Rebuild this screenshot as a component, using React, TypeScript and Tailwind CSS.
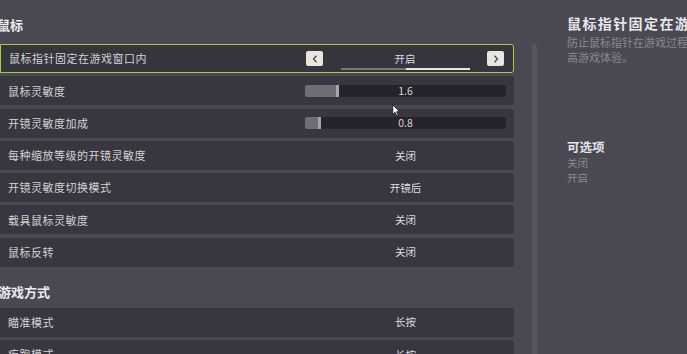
import React from 'react';

type Row = {
  label: string;
  value: string;
  kind?: 'toggle' | 'slider';
  fill?: number;
  active?: boolean;
};

const mouseRows: Row[] = [
  { label: '鼠标指针固定在游戏窗口内', value: '开启', kind: 'toggle', active: true },
  { label: '鼠标灵敏度', value: '1.6', kind: 'slider', fill: 31 },
  { label: '开镜灵敏度加成', value: '0.8', kind: 'slider', fill: 13 },
  { label: '每种缩放等级的开镜灵敏度', value: '关闭' },
  { label: '开镜灵敏度切换模式', value: '开镜后' },
  { label: '载具鼠标灵敏度', value: '关闭' },
  { label: '鼠标反转', value: '关闭' },
];

const playRows: Row[] = [
  { label: '瞄准模式', value: '长按' },
  { label: '疾跑模式', value: '长按' },
];

const Chevron: React.FC<{ dir: 'left' | 'right' }> = ({ dir }) => (
  <svg width="6" height="8" viewBox="0 0 6 8" fill="none">
    <path
      d={dir === 'left' ? 'M4.5 0.8 L1.5 4 L4.5 7.2' : 'M1.5 0.8 L4.5 4 L1.5 7.2'}
      stroke="#4a4850"
      strokeWidth="1.3"
    />
  </svg>
);

const SettingRow: React.FC<{ row: Row }> = ({ row }) => {
  return (
    <div
      className={`flex items-center h-[29px] shrink-0 rounded-r-[3px] ${
        row.active ? 'bg-[#36343c] border-[1.5px] border-[#a3cf45]' : 'bg-[#38363e]'
      }`}
    >
      <div className="flex-1 pl-[8px] text-[11px] tracking-[0.5px] text-[#d3d2d6]">{row.label}</div>
      <div className="w-[201px] mr-[8px] h-full flex items-center justify-center">
        {row.kind === 'toggle' && (
          <div className="w-full h-full flex items-center justify-between pl-[2px] pr-[1px]">
            <div className="w-[17px] h-[15px] rounded-[2px] bg-[#e8e6df] flex items-center justify-center">
              <Chevron dir="left" />
            </div>
            <div className="relative h-full flex-1 flex items-center justify-center">
              <span className="text-[10.5px] text-[#dcdbe0]">{row.value}</span>
              <div className="absolute bottom-[2.5px] left-[18px] flex">
                <div className="w-[65px] h-[2px] bg-[#77757d]" />
                <div className="w-[64px] h-[2px] bg-[#e6e5e8]" />
              </div>
            </div>
            <div className="w-[17px] h-[15px] rounded-[2px] bg-[#e8e6df] flex items-center justify-center">
              <Chevron dir="right" />
            </div>
          </div>
        )}
        {row.kind === 'slider' && (
          <div className="relative w-full h-[12px] rounded-[2px] bg-[#26242a] flex items-center">
            <div className="h-full flex rounded-l-[2px] overflow-hidden">
              <div className="h-full bg-[#6f6d75]" style={{ width: row.fill }} />
              <div className="h-full w-[3px] bg-[#a8a6ad]" />
            </div>
            <span className="absolute inset-0 flex items-center justify-center text-[10.5px] text-[#d7d6da]">
              {row.value}
            </span>
          </div>
        )}
        {!row.kind && <span className="text-[10.5px] text-[#dcdbe0]">{row.value}</span>}
      </div>
    </div>
  );
};

const App: React.FC = () => {
  return (
    <div className="relative w-[687px] h-[354px] overflow-hidden bg-[#4a4853] flex font-['Noto_Sans_CJK_SC',sans-serif]">
      {/* 설정 목록 */}
      <div className="w-[514px] shrink-0 flex flex-col">
        <div className="shrink-0 pt-[16px] h-[44px] -ml-[3px] text-[13px] leading-[18px] font-bold text-[#ececef]">鼠标</div>
        <div className="shrink-0 flex flex-col gap-[3.3px]">
          {mouseRows.map((row) => (
            <SettingRow key={row.label} row={row} />
          ))}
        </div>
        <div className="shrink-0 mt-[16px] mb-[7px] -ml-[2px] text-[13px] leading-[18px] font-bold text-[#ececef]">游戏方式</div>
        <div className="shrink-0 flex flex-col gap-[3.3px]">
          {playRows.map((row) => (
            <SettingRow key={row.label} row={row} />
          ))}
        </div>
      </div>

      {/* 스크롤바 */}
      <div className="ml-[18px] mt-[44px] w-[5px] shrink-0 bg-[#56545e] rounded-t-[2px]" />

      {/* 설명 패널 */}
      <div className="ml-[30px] w-[222px] shrink-0">
        <div className="pt-[14px] text-[14px] leading-[18px] tracking-[1.4px] font-bold text-[#e8e7eb] whitespace-nowrap">
          鼠标指针固定在游戏窗口内
        </div>
        <div className="mt-[2.5px] text-[11px] leading-[15px] text-[#8b8992]">
          防止鼠标指针在游戏过程中移出游戏窗口，提高游戏体验。
        </div>
        <div className="mt-[73px] text-[12.5px] leading-[17px] font-bold text-[#e4e3e7]">可选项</div>
        <div className="text-[10.5px] leading-[15px] text-[#8b8992]">关闭</div>
        <div className="text-[10.5px] leading-[15px] text-[#8b8992]">开启</div>
      </div>

      {/* 마우스 커서 */}
      <svg className="absolute left-[392px] top-[104px]" width="9" height="13" viewBox="0 0 9 13">
        <path d="M0.7 0.7 L0.7 10.5 L3 8.3 L4.8 12 L6.3 11.3 L4.6 7.7 L7.8 7.7 Z" fill="#f4f4f4" stroke="#1e1e22" strokeWidth="0.9" />
      </svg>
    </div>
  );
};

export default App;
